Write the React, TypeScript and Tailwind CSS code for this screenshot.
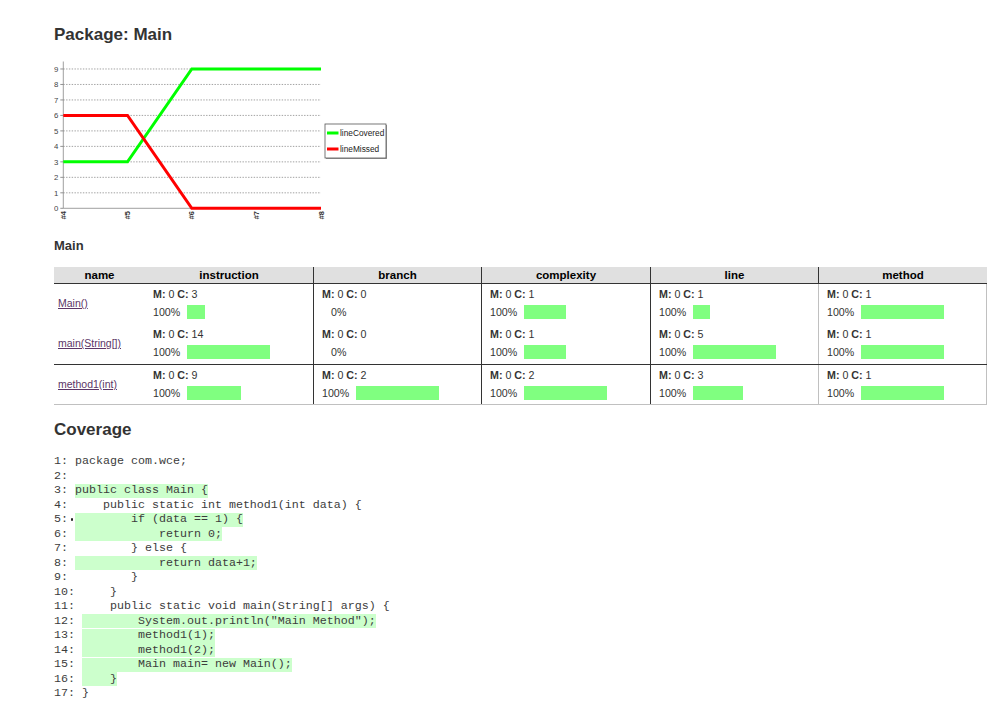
const Y0 = 208.3
const UNIT = 15.48
const XS = [63.3, 127.5, 191.8, 256.2, 321]
const yOf = (v: number) => Y0 - v * UNIT

const covered = [3, 3, 9, 9, 9]
const missed = [6, 6, 0, 0, 0]

function TrendChart() {
  const pts = (vals: number[]) => vals.map((v, i) => `${XS[i]},${yOf(v)}`).join(' ')
  return (
    <svg width={340} height={172} viewBox="54 56 340 172" className="block">
      {Array.from({ length: 10 }, (_, k) => (
        <g key={k}>
          {k > 0 && (
            <line x1={63.3} x2={321} y1={yOf(k)} y2={yOf(k)} stroke="#8a8a8a" strokeWidth={0.8} strokeDasharray="1.4 1.4" />
          )}
          <line x1={60.3} x2={63.3} y1={yOf(k)} y2={yOf(k)} stroke="#777" strokeWidth={0.8} />
          <text x={58.4} y={yOf(k) + 2.7} fontSize={7.8} textAnchor="end" fill="#444" fontFamily="Liberation Sans, sans-serif">
            {k}
          </text>
        </g>
      ))}
      <line x1={63.3} x2={63.3} y1={61.5} y2={Y0} stroke="#888" strokeWidth={0.8} />
      <line x1={63.3} x2={321} y1={Y0} y2={Y0} stroke="#888" strokeWidth={0.8} />
      {XS.map((x, i) => (
        <text
          key={i}
          x={x + 2.6}
          y={211}
          fontSize={7.4}
          fill="#333"
          fontWeight="bold"
          textAnchor="end"
          fontFamily="Liberation Sans, sans-serif"
          transform={`rotate(-90 ${x + 2.6} 211)`}
        >
          #{i + 4}
        </text>
      ))}
      <polyline points={pts(covered)} fill="none" stroke="#00ff00" strokeWidth={3} />
      <polyline points={pts(missed)} fill="none" stroke="#ff0000" strokeWidth={3} />
      <rect x={326} y={125} width={61} height={34} fill="#9a9a9a" />
      <rect x={325} y={124} width={61} height={34} fill="#fff" stroke="#555" strokeWidth={0.8} />
      <line x1={327} x2={338.5} y1={133} y2={133} stroke="#00ff00" strokeWidth={3} />
      <text x={340} y={136} fontSize={8.3} fill="#222" fontFamily="Liberation Sans, sans-serif">lineCovered</text>
      <line x1={327} x2={338.5} y1={149} y2={149} stroke="#ff0000" strokeWidth={3} />
      <text x={340} y={152} fontSize={8.3} fill="#222" fontFamily="Liberation Sans, sans-serif">lineMissed</text>
    </svg>
  )
}

const columns = ['instruction', 'branch', 'complexity', 'line', 'method']
const maxes = [14, 2, 2, 5, 1]

const rows = [
  { name: 'Main()', cells: [3, 0, 1, 1, 1], border: '' },
  { name: 'main(String[])', cells: [14, 0, 1, 5, 1], border: 'border-b border-[#333] h-[41px]' },
  { name: 'method1(int)', cells: [9, 2, 2, 3, 1], border: 'border-b border-[#c0c0c0] h-[40px]' },
]

const gridCols = 'grid grid-cols-[91px_168px_168px_169px_168px_169px]'

function CoverageCell({ covered, max, first, last }: { covered: number; max: number; first: boolean; last: boolean }) {
  const width = max > 0 ? (covered / max) * 83.4 : 0
  return (
    <div
      className={`pl-[8px] pt-[3px] ${first ? '' : 'border-l border-[#333]'} ${last ? 'border-r border-[#c0c0c0]' : ''}`}
    >
      <div className="text-[10.67px] leading-[14px] text-[#333]">
        <span className="font-bold">M:</span> 0 <span className="font-bold">C:</span> {covered}
      </div>
      <div className="mt-[4px] flex h-[14px] items-center text-[10.67px] text-[#333]">
        {covered > 0 ? (
          <>
            <span className="w-[27px]">100%</span>
            <span className="ml-[7px] h-[14px] bg-[#80ff80]" style={{ width }} />
          </>
        ) : (
          <span className="pl-[9px]">0%</span>
        )}
      </div>
    </div>
  )
}

type CodeLine = { n: number; text: string; hit?: boolean; branch?: boolean }

const code: CodeLine[] = [
  { n: 1, text: 'package com.wce;' },
  { n: 2, text: '' },
  { n: 3, text: 'public class Main {', hit: true },
  { n: 4, text: '    public static int method1(int data) {' },
  { n: 5, text: '        if (data == 1) {', hit: true, branch: true },
  { n: 6, text: '            return 0;', hit: true },
  { n: 7, text: '        } else {' },
  { n: 8, text: '            return data+1;', hit: true },
  { n: 9, text: '        }' },
  { n: 10, text: '    }' },
  { n: 11, text: '    public static void main(String[] args) {' },
  { n: 12, text: '        System.out.println("Main Method");', hit: true },
  { n: 13, text: '        method1(1);', hit: true },
  { n: 14, text: '        method1(2);', hit: true },
  { n: 15, text: '        Main main= new Main();', hit: true },
  { n: 16, text: '    }', hit: true },
  { n: 17, text: '}' },
]

export default function App() {
  return (
    <div className="min-h-screen bg-white pl-[54px] pt-[25px] font-['Liberation_Sans',Arial,sans-serif] text-[#333]">
      <h2 className="text-[17px] font-bold leading-[20px]">Package: Main</h2>
      <div className="mt-[11px]">
        <TrendChart />
      </div>

      <h3 className="mt-[10px] text-[13px] font-bold leading-[16px]">Main</h3>

      <div className="mt-[13px] w-[933px]">
        <div className={`${gridCols} h-[17px] border-b border-[#333] bg-[#e0e0e0] text-[11.5px] font-bold leading-[16px] text-black`}>
          <div className="text-center">name</div>
          {columns.map((c, i) => (
            <div key={c} className={`text-center ${i > 0 ? 'border-l border-[#333]' : ''}`}>
              {c}
            </div>
          ))}
        </div>
        {rows.map((r) => (
          <div key={r.name} className={`${gridCols} h-[40px] ${r.border}`}>
            <div className="flex items-center pl-[4px]">
              <a href="#" className="text-[10.5px] text-[#5c3566] underline">
                {r.name}
              </a>
            </div>
            {r.cells.map((c, i) => (
              <CoverageCell key={i} covered={c} max={maxes[i]} first={i === 0} last={i === 4} />
            ))}
          </div>
        ))}
      </div>

      <h2 className="mt-[15px] text-[17px] font-bold leading-[20px]">Coverage</h2>

      <div className="mt-[14.5px] pb-[20px] font-['Liberation_Mono','Courier_New',monospace] text-[11.67px] text-[#3c3c3c]">
        {code.map((l) => (
          <div key={l.n} className="flex h-[14.5px] items-center whitespace-pre">
            <span>{l.n}:</span>
            {l.branch ? (
              <span className="relative w-[7px]">
                <span className="absolute left-[2.5px] top-[-1.5px] h-[2.5px] w-[2.5px] rounded-full bg-[#222]" />
              </span>
            ) : (
              <span> </span>
            )}
            {l.hit ? (
              <span className="inline-flex h-[14px] items-center bg-[#ccffcc]">{l.text}</span>
            ) : (
              <span>{l.text}</span>
            )}
          </div>
        ))}
      </div>
    </div>
  )
}
